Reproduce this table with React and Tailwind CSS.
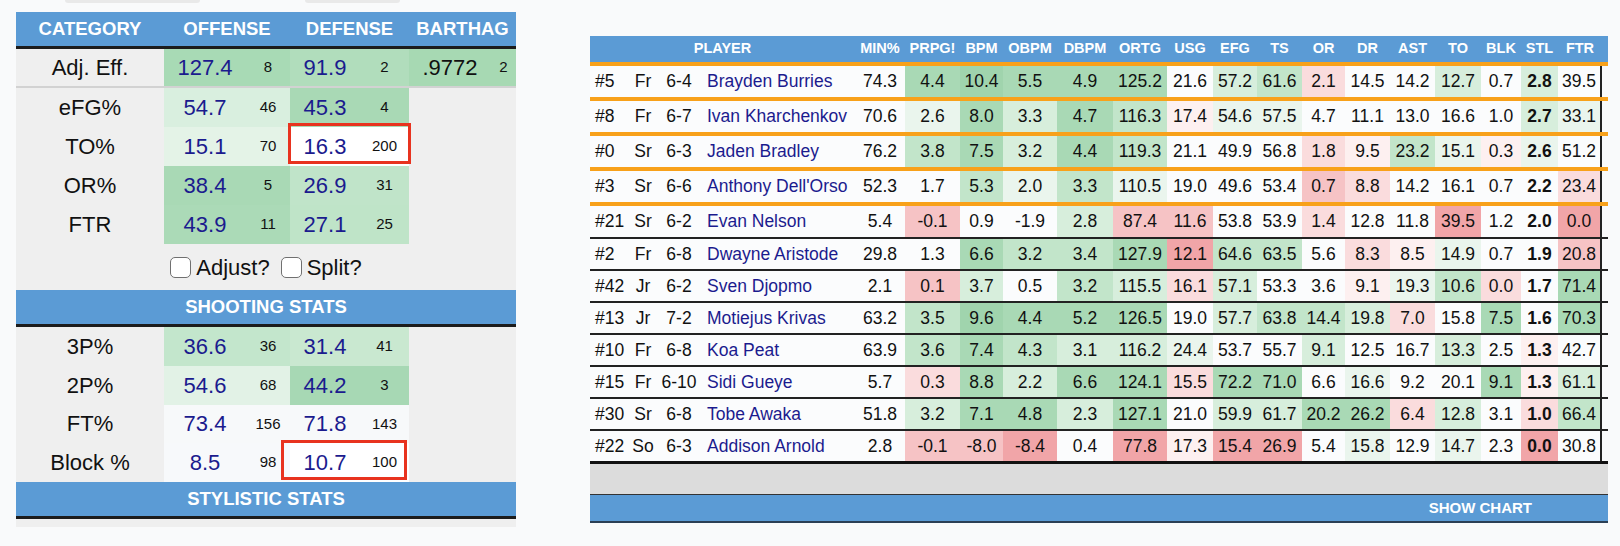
import React from "react";

const NAVY = "text-[#1b1b8e]";

const LEFT_TOP = [
  { cat: "eFG%", o: ["54.7", "46", "bg-[#d9efdf]"], d: ["45.3", "4", "bg-[#a9d9b5]"] },
  { cat: "TO%", o: ["15.1", "70", "bg-[#e4f3e7]"], d: ["16.3", "200", "bg-[#ffffff]"], box: "to" },
  { cat: "OR%", o: ["38.4", "5", "bg-[#a9d9b5]"], d: ["26.9", "31", "bg-[#c0e4c9]"] },
  { cat: "FTR", o: ["43.9", "11", "bg-[#abdab7]"], d: ["27.1", "25", "bg-[#bfe4c8]"] },
];

const LEFT_SHOOT = [
  { cat: "3P%", o: ["36.6", "36", "bg-[#c3e6cc]"], d: ["31.4", "41", "bg-[#c9e8d0]"] },
  { cat: "2P%", o: ["54.6", "68", "bg-[#e2f2e6]"], d: ["44.2", "3", "bg-[#a7d8b4]"] },
  { cat: "FT%", o: ["73.4", "156", "bg-[#f7f9fa]"], d: ["71.8", "143", "bg-[#f7f9fa]"] },
  { cat: "Block %", o: ["8.5", "98", "bg-[#f7f9fb]"], d: ["10.7", "100", "bg-[#ffffff]"], box: "blk" },
];

function LeftHeader({ children }) {
  return (
    <div className="h-[37px] bg-[#5b9bd5] border-b-[3px] border-[#1c1c1c] flex items-center justify-center text-white font-bold text-[18.5px]">
      {children}
    </div>
  );
}

function StatRow({ r, h }) {
  return (
    <div className={`flex ${h}`}>
      <div className="w-[148px] flex items-center justify-center text-[22px] text-[#111]">{r.cat}</div>
      <div className={`flex ${r.o[2]}`}>
        <div className={`w-[82px] flex items-center justify-center text-[22px] ${NAVY}`}>{r.o[0]}</div>
        <div className="w-[44px] flex items-center justify-center text-[15px] text-[#111]">{r.o[1]}</div>
      </div>
      <div className={`flex relative ${r.d[2]}`}>
        <div className={`w-[70px] flex items-center justify-center text-[22px] ${NAVY}`}>{r.d[0]}</div>
        <div className="w-[49px] flex items-center justify-center text-[15px] text-[#111]">{r.d[1]}</div>
        {r.box === "to" && (
          <span className="absolute left-[-2px] right-[-2px] top-[-4px] bottom-[2px] border-[3px] border-[#e8331f]" />
        )}
        {r.box === "blk" && (
          <span className="absolute left-[-9px] right-[2px] top-[-3px] bottom-[2px] border-[3px] border-[#e8331f]" />
        )}
      </div>
    </div>
  );
}

function Checkbox({ label }) {
  return (
    <div className="flex items-center gap-[5px]">
      <span className="w-[21px] h-[21px] rounded-[5px] border-[1.5px] border-[#707070] bg-white" />
      <span className="text-[22px] text-[#111]">{label}</span>
    </div>
  );
}

function LeftPanel() {
  return (
    <div className="w-[500px] bg-[#efefef] ml-[16px]">
      <div className="h-[37px] bg-[#5b9bd5] border-b-[3px] border-[#1c1c1c] flex text-white font-bold text-[18.5px]">
        <div className="w-[148px] flex items-center justify-center">CATEGORY</div>
        <div className="w-[126px] flex items-center justify-center">OFFENSE</div>
        <div className="w-[119px] flex items-center justify-center">DEFENSE</div>
        <div className="flex-1 flex items-center justify-center">BARTHAG</div>
      </div>
      <div className="flex h-[39px] border-b-2 border-[#d2d2d2]">
        <div className="w-[148px] flex items-center justify-center text-[22px] text-[#111]">Adj. Eff.</div>
        <div className="flex bg-[#a8dab5]">
          <div className={`w-[82px] flex items-center justify-center text-[22px] ${NAVY}`}>127.4</div>
          <div className="w-[44px] flex items-center justify-center text-[15px] text-[#111]">8</div>
        </div>
        <div className="flex bg-[#b1ddbc]">
          <div className={`w-[70px] flex items-center justify-center text-[22px] ${NAVY}`}>91.9</div>
          <div className="w-[49px] flex items-center justify-center text-[15px] text-[#111]">2</div>
        </div>
        <div className="flex flex-1 bg-[#a7d9b3]">
          <div className="w-[82px] flex items-center justify-center text-[22px] text-[#111]">.9772</div>
          <div className="flex-1 flex items-center justify-center text-[15px] text-[#111]">2</div>
        </div>
      </div>
      {LEFT_TOP.map((r) => (
        <StatRow key={r.cat} r={r} h="h-[39px]" />
      ))}
      <div className="h-[46px] flex items-center justify-center gap-[11px]">
        <Checkbox label="Adjust?" />
        <Checkbox label="Split?" />
      </div>
      <LeftHeader>SHOOTING STATS</LeftHeader>
      {LEFT_SHOOT.map((r) => (
        <StatRow key={r.cat} r={r} h="h-[38.75px]" />
      ))}
      <LeftHeader>STYLISTIC STATS</LeftHeader>
      <div className="h-[8px]" />
    </div>
  );
}

const COLS = ["PRPG!", "BPM", "OBPM", "DBPM", "ORTG", "USG", "EFG", "TS", "OR", "DR", "AST", "TO", "BLK", "STL", "FTR"];
const WIDTHS = [
  "w-[55px]", "w-[43px]", "w-[54px]", "w-[56px]", "w-[54px]", "w-[46px]", "w-[44px]", "w-[45px]",
  "w-[43px]", "w-[45px]", "w-[45px]", "w-[46px]", "w-[40px]", "w-[37px]", "w-[44px]",
];
const BG = {
  G4: "bg-[#a0d4ad]",
  G3: "bg-[#a9d9b5]",
  G2: "bg-[#c2e5ca]",
  G1: "bg-[#d7eedc]",
  G0: "bg-[#eaf5ed]",
  W: "bg-[#fbfcfd]",
  R0: "bg-[#fdf0f0]",
  R1: "bg-[#fadcdd]",
  R2: "bg-[#f6c3c5]",
  R3: "bg-[#f1a5a8]",
};

const ROWS = [
  ["#5", "Fr", "6-4", "Brayden Burries", "74.3", "4.4 G3", "10.4 G4", "5.5 G3", "4.9 G3", "125.2 G3", "21.6 W", "57.2 G1", "61.6 G2", "2.1 R1", "14.5 W", "14.2 W", "12.7 G1", "0.7 W", "2.8 G1", "39.5 W"],
  ["#8", "Fr", "6-7", "Ivan Kharchenkov", "70.6", "2.6 G0", "8.0 G3", "3.3 G1", "4.7 G3", "116.3 G2", "17.4 R0", "54.6 G0", "57.5 G0", "4.7 W", "11.1 W", "13.0 W", "16.6 W", "1.0 W", "2.7 G1", "33.1 G0"],
  ["#0", "Sr", "6-3", "Jaden Bradley", "76.2", "3.8 G2", "7.5 G3", "3.2 G1", "4.4 G3", "119.3 G2", "21.1 W", "49.9 W", "56.8 W", "1.8 R1", "9.5 R0", "23.2 G2", "15.1 G0", "0.3 R0", "2.6 G0", "51.2 W"],
  ["#3", "Sr", "6-6", "Anthony Dell'Orso", "52.3", "1.7 W", "5.3 G2", "2.0 G0", "3.3 G2", "110.5 G0", "19.0 W", "49.6 W", "53.4 W", "0.7 R2", "8.8 R1", "14.2 W", "16.1 W", "0.7 W", "2.2 W", "23.4 R1"],
  ["#21", "Sr", "6-2", "Evan Nelson", "5.4", "-0.1 R2", "0.9 W", "-1.9 W", "2.8 G1", "87.4 R2", "11.6 R2", "53.8 W", "53.9 W", "1.4 R1", "12.8 W", "11.8 W", "39.5 R3", "1.2 W", "2.0 W", "0.0 R3"],
  ["#2", "Fr", "6-8", "Dwayne Aristode", "29.8", "1.3 W", "6.6 G3", "3.2 G2", "3.4 G2", "127.9 G3", "12.1 R3", "64.6 G2", "63.5 G2", "5.6 W", "8.3 R1", "8.5 R0", "14.9 G0", "0.7 W", "1.9 W", "20.8 R2"],
  ["#42", "Jr", "6-2", "Sven Djopmo", "2.1", "0.1 R2", "3.7 G1", "0.5 W", "3.2 G2", "115.5 G1", "16.1 R1", "57.1 G1", "53.3 W", "3.6 W", "9.1 R0", "19.3 G0", "10.6 G2", "0.0 R1", "1.7 W", "71.4 G3"],
  ["#13", "Jr", "7-2", "Motiejus Krivas", "63.2", "3.5 G2", "9.6 G4", "4.4 G3", "5.2 G3", "126.5 G3", "19.0 W", "57.7 G1", "63.8 G2", "14.4 G2", "19.8 G1", "7.0 R1", "15.8 W", "7.5 G3", "1.6 W", "70.3 G3"],
  ["#10", "Fr", "6-8", "Koa Peat", "63.9", "3.6 G2", "7.4 G3", "4.3 G2", "3.1 G1", "116.2 G1", "24.4 G0", "53.7 W", "55.7 W", "9.1 G1", "12.5 W", "16.7 W", "13.3 G1", "2.5 W", "1.3 R0", "42.7 W"],
  ["#15", "Fr", "6-10", "Sidi Gueye", "5.7", "0.3 R1", "8.8 G3", "2.2 G1", "6.6 G3", "124.1 G3", "15.5 R1", "72.2 G3", "71.0 G3", "6.6 W", "16.6 G0", "9.2 W", "20.1 W", "9.1 G3", "1.3 R0", "61.1 G1"],
  ["#30", "Sr", "6-8", "Tobe Awaka", "51.8", "3.2 G1", "7.1 G3", "4.8 G3", "2.3 G1", "127.1 G3", "21.0 W", "59.9 G1", "61.7 G1", "20.2 G3", "26.2 G3", "6.4 R1", "12.8 G1", "3.1 W", "1.0 R1", "66.4 G2"],
  ["#22", "So", "6-3", "Addison Arnold", "2.8", "-0.1 R2", "-8.0 R2", "-8.4 R3", "0.4 W", "77.8 R3", "17.3 R0", "15.4 R3", "26.9 R3", "5.4 W", "15.8 G0", "12.9 W", "14.7 G0", "2.3 W", "0.0 R3", "30.8 W"],
];

function rowBorder(i) {
  if (i < 4) return "h-[35px] border-b-4 border-[#f8a11a]";
  if (i < 11) return i === 4 ? "h-[33px] border-b-2 border-[#222]" : "h-[32px] border-b-2 border-[#222]";
  return "h-[33px] border-b-[3px] border-[#111]";
}

function RightTable() {
  return (
    <div className="w-[1018px] ml-[74px] mt-[24px] text-[17.5px] text-[#111]">
      <div className="flex h-[30px] bg-[#5b9bd5] border-b-4 border-[#f8a11a] text-white font-bold text-[14.5px]">
        <div className="w-[265px] flex items-center justify-center">PLAYER</div>
        <div className="w-[50px] flex items-center justify-center">MIN%</div>
        {COLS.map((c, i) => (
          <div key={c} className={`${WIDTHS[i]} flex items-center justify-center`}>
            {c}
          </div>
        ))}
        <div className="flex-1" />
      </div>
      {ROWS.map((r, i) => (
        <div key={r[3]} className={`flex bg-[#fbfcfd] ${rowBorder(i)}`}>
          <div className="w-[40px] flex items-center pl-[5px]">{r[0]}</div>
          <div className="w-[26px] flex items-center justify-center">{r[1]}</div>
          <div className="w-[46px] flex items-center justify-center">{r[2]}</div>
          <div className={`w-[153px] flex items-center pl-[5px] whitespace-nowrap ${NAVY}`}>{r[3]}</div>
          <div className="w-[50px] flex items-center justify-center">{r[4]}</div>
          {r.slice(5).map((v, j) => {
            const [val, code] = v.split(" ");
            const last = j === 14;
            return (
              <div
                key={j}
                className={`${WIDTHS[j]} ${BG[code]} flex items-center justify-center ${j === 13 ? "font-bold" : ""} ${last ? "border-r-2 border-[#222]" : ""}`}
              >
                {val}
              </div>
            );
          })}
          <div className="flex-1 bg-[#f9fafb]" />
        </div>
      ))}
      <div className="h-[31px] bg-[#dcdcdc] border-b-[1.5px] border-[#333]" />
      <div className="h-[28px] bg-[#5b9bd5] border-b-2 border-[#2b3f55] flex items-center justify-end pr-[76px] text-white font-bold text-[15px]">
        SHOW CHART
      </div>
    </div>
  );
}

export default function App() {
  return (
    <div className="w-[1620px] h-[546px] bg-[#f9fafb] overflow-hidden font-['Liberation_Sans',Arial,sans-serif]">
      <div className="flex h-[3px]">
        <div className="ml-[65px] w-[135px] h-[3px] bg-[#e9e9e9] rounded-b-[8px]" />
        <div className="ml-[105px] w-[95px] h-[3px] bg-[#e9e9e9] rounded-b-[8px]" />
      </div>
      <div className="flex items-start mt-[9px]">
        <LeftPanel />
        <RightTable />
      </div>
    </div>
  );
}
